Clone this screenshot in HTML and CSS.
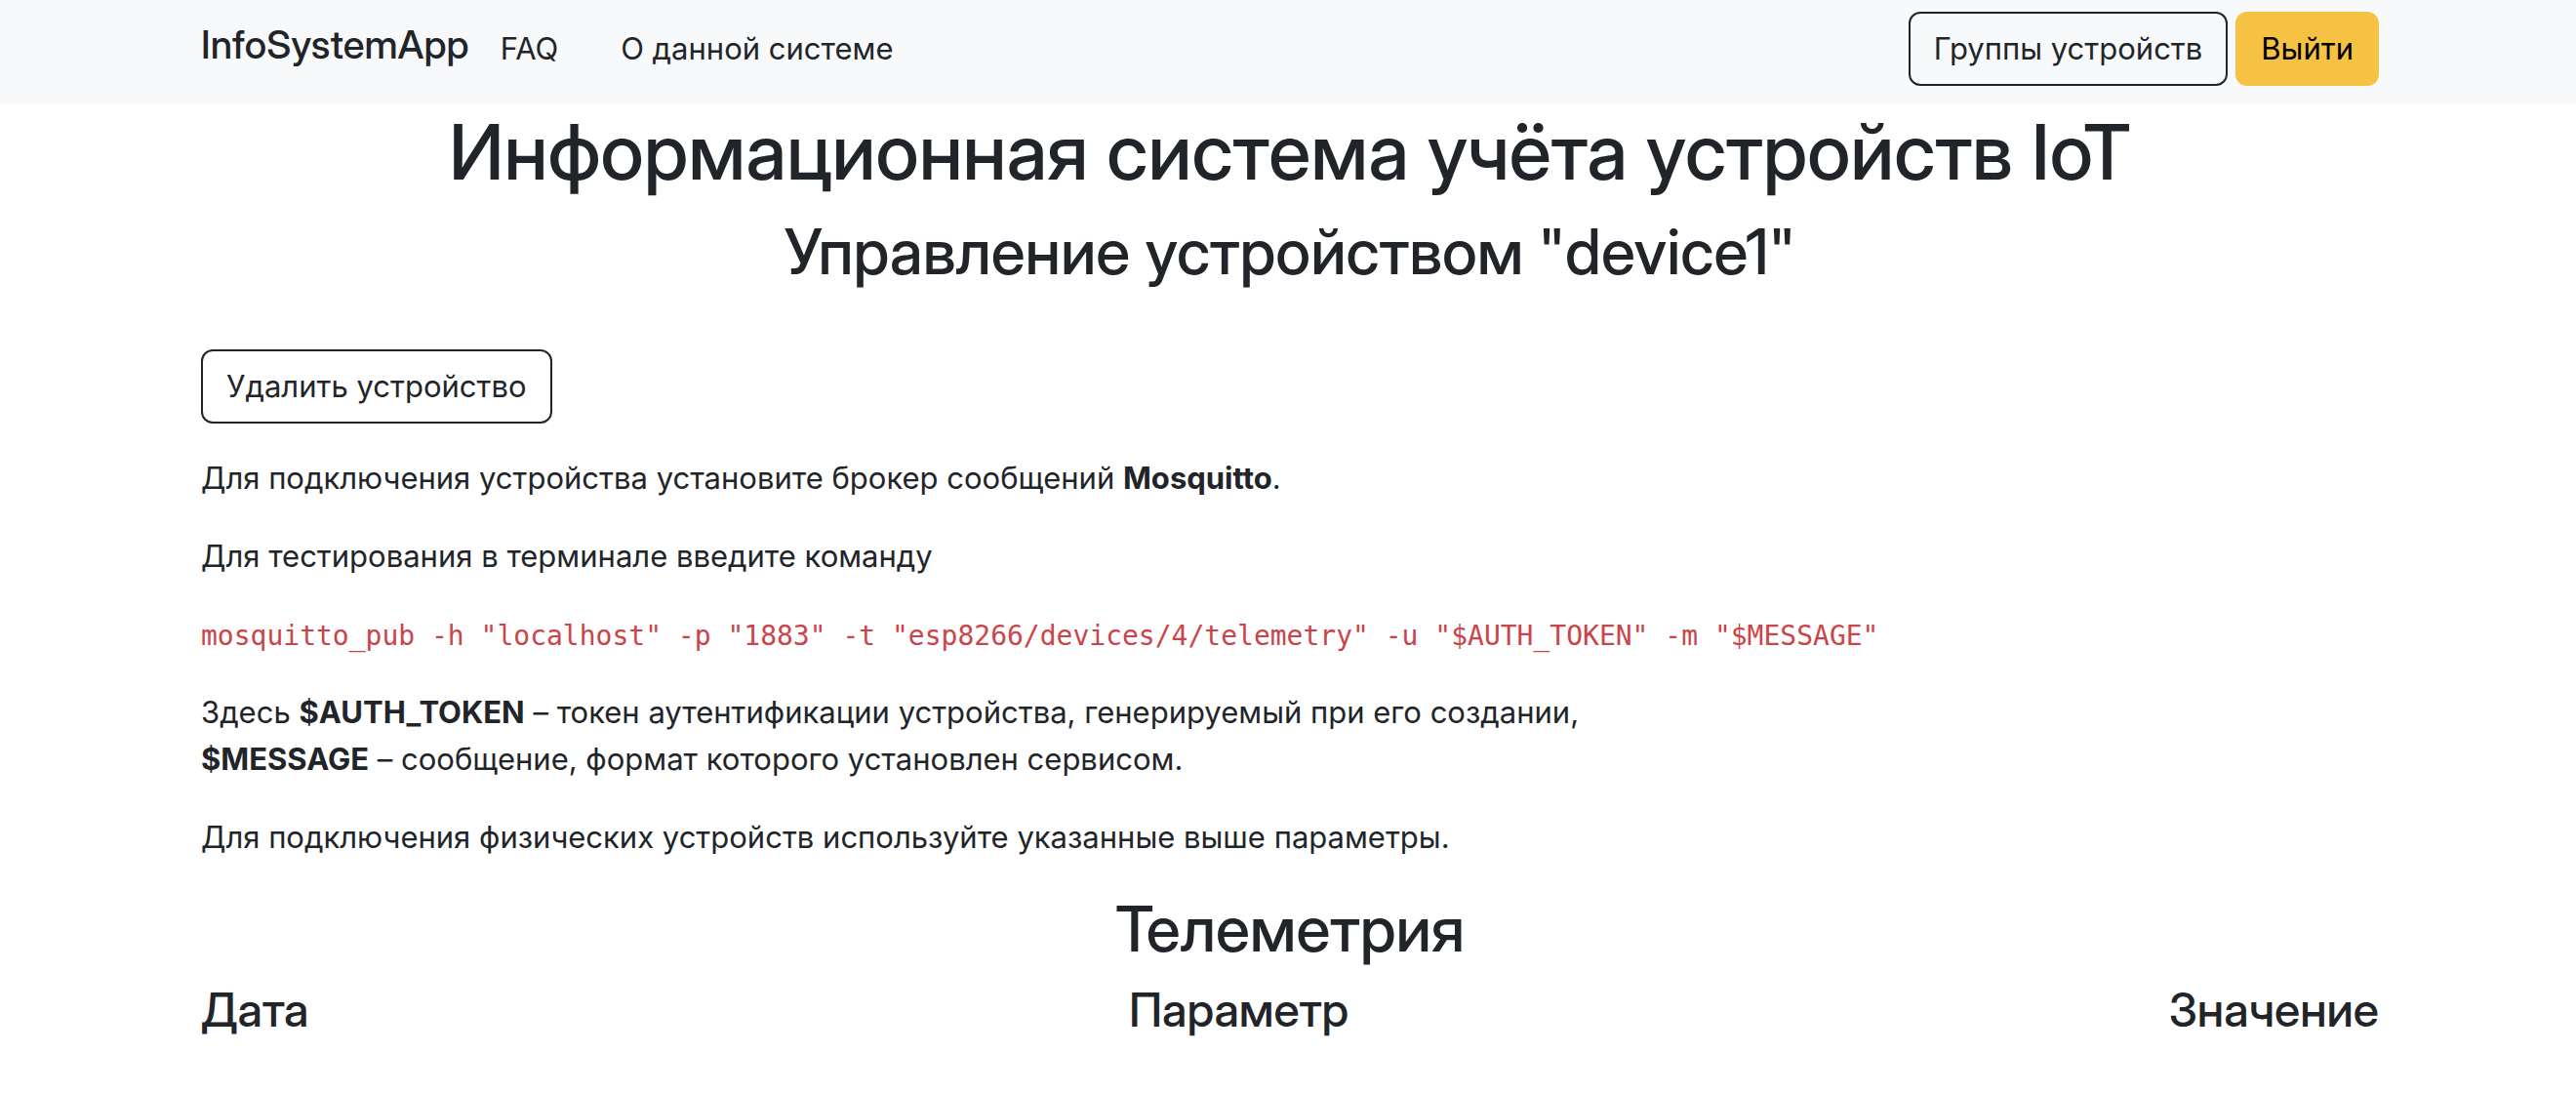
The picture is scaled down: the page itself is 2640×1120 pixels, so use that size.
FILE: index.html
```html
<!DOCTYPE html>
<html lang="ru">
<head>
<meta charset="utf-8">
<meta name="viewport" content="width=device-width, initial-scale=1">
<title>InfoSystemApp</title>
<link rel="stylesheet" href="styles.css">
</head>
<body>
<header class="navbar">
  <div class="container navbar-inner">
    <a class="brand" href="#">InfoSystemApp</a>
    <nav class="nav">
      <a class="nav-link" href="#">FAQ</a>
      <a class="nav-link" href="#">О данной системе</a>
    </nav>
    <div class="actions">
      <button class="btn btn-outline" type="button">Группы устройств</button>
      <button class="btn btn-warning" type="button">Выйти</button>
    </div>
  </div>
</header>
<main class="container">
  <h1 class="title">Информационная система учёта устройств IoT</h1>
  <h2 class="subtitle">Управление устройством "device1"</h2>
  <button class="btn btn-outline delete" type="button">Удалить устройство</button>
  <p class="text">Для подключения устройства установите брокер сообщений <strong>Mosquitto</strong>.</p>
  <p class="text">Для тестирования в терминале введите команду</p>
  <p class="text"><code class="code">mosquitto_pub -h "localhost" -p "1883" -t "esp8266/devices/4/telemetry" -u "$AUTH_TOKEN" -m "$MESSAGE"</code></p>
  <p class="text">Здесь <strong>$AUTH_TOKEN</strong> – токен аутентификации устройства, генерируемый при его создании,<br><strong>$MESSAGE</strong> – сообщение, формат которого установлен сервисом.</p>
  <p class="text">Для подключения физических устройств используйте указанные выше параметры.</p>
  <h2 class="section-title">Телеметрия</h2>
  <div class="columns">
    <h3 class="column-title">Дата</h3>
    <h3 class="column-title">Параметр</h3>
    <h3 class="column-title">Значение</h3>
  </div>
</main>
</body>
</html>
```
FILE: styles.css
```css
* {
  box-sizing: border-box;
}

body {
  margin: 0;
  background: #fff;
  color: #212529;
  font: 400 31px/48px Inter, "Liberation Sans", sans-serif;
}

.container {
  width: 100%;
  max-width: 2280px;
  margin: 0 auto;
  padding: 0 22px 0 26px;
}

.navbar {
  padding: 12px 0 18px;
  background: #f8f9fa;
}

.navbar-inner {
  display: flex;
  align-items: center;
}

.brand {
  margin: 0 32px 8px 0;
  color: #212529;
  font-family: "Inter Display", Inter, "Liberation Sans", sans-serif;
  font-size: 40px;
  font-variation-settings: "opsz" 32;
  font-weight: 500;
  text-decoration: none;
}

.nav {
  display: flex;
  flex: 1;
  gap: 64px;
}

.nav-link {
  color: #212529;
  text-decoration: none;
}

.actions {
  display: flex;
  gap: 8px;
}

.btn {
  padding: 12px 24px;
  border: 2px solid #212529;
  border-radius: 12px;
  background: transparent;
  color: #212529;
  font: inherit;
  cursor: pointer;
}

.btn-warning {
  border-color: #f6c244;
  background: #f6c244;
  color: #000;
}

.title,
.subtitle,
.section-title,
.column-title {
  margin: 0 0 16px;
  font-family: "Inter Display", Inter, "Liberation Sans", sans-serif;
  font-variation-settings: "opsz" 32;
  font-weight: 500;
  text-align: center;
}

.title {
  font-size: 79px;
  line-height: 98px;
}

.subtitle {
  margin-bottom: 62px;
  font-size: 64px;
  line-height: 76px;
}

.delete {
  display: block;
  margin-bottom: 32px;
}

.text {
  margin: 0 0 32px;
}

.code {
  color: #cb444a;
  font: 28px "DejaVu Sans Mono", monospace;
}

.section-title {
  font-size: 64px;
  line-height: 76px;
}

.columns {
  display: flex;
  justify-content: space-between;
}

.column-title {
  font-size: 48px;
  line-height: 58px;
}
```
